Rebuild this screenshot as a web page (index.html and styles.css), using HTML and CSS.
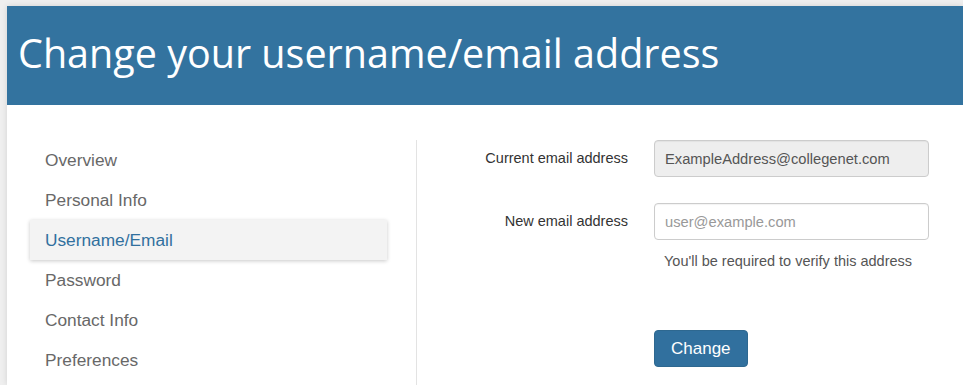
FILE: index.html
```html
<!DOCTYPE html>
<html lang="en">
<head>
<meta charset="utf-8">
<title>Change your username/email address</title>
<link rel="stylesheet" href="styles.css">
</head>
<body>
<div class="card">
  <header class="page-header">
    <h1 class="page-title">Change your username/email address</h1>
  </header>
  <div class="content">
    <nav class="sidebar">
      <a class="nav-item" href="#">Overview</a>
      <a class="nav-item" href="#">Personal Info</a>
      <a class="nav-item active" href="#">Username/Email</a>
      <a class="nav-item" href="#">Password</a>
      <a class="nav-item" href="#">Contact Info</a>
      <a class="nav-item" href="#">Preferences</a>
    </nav>
    <form class="form">
      <label class="form-label" for="cur">Current email address</label>
      <input class="form-control readonly" id="cur" type="text" value="ExampleAddress@collegenet.com" readonly>
      <label class="form-label" for="new">New email address</label>
      <div class="field">
        <input class="form-control" id="new" type="email" placeholder="user@example.com">
        <p class="help">You'll be required to verify this address</p>
      </div>
      <div class="actions">
        <button class="btn" type="button">Change</button>
      </div>
    </form>
  </div>
</div>
</body>
</html>
```
FILE: styles.css
```css
html, body {
  margin: 0;
  padding: 0;
}
body {
  background: #efefef;
  font-family: "Liberation Sans", Arial, sans-serif;
  height: 385px;
  overflow: hidden;
}
.card {
  margin: 6px 0 0 7px;
  background: #fff;
  box-shadow: 0 0 6px rgba(0, 0, 0, 0.12);
  height: 379px;
  overflow: hidden;
}
.page-header {
  background: #33739f;
  height: 99px;
  display: flex;
  align-items: center;
  padding-left: 11px;
}
.page-title {
  margin: 0;
  font-family: "Open Sans", sans-serif;
  font-weight: 400;
  font-size: 39.5px;
  color: #fff;
  line-height: 1;
  position: relative;
  top: -2px;
}
.content {
  display: flex;
  padding-top: 35px;
}
.sidebar {
  display: flex;
  flex-direction: column;
  box-sizing: content-box;
  width: 357px;
  padding-left: 23px;
  padding-right: 29px;
  border-right: 1px solid #e3e3e3;
  min-height: 260px;
}
.nav-item {
  display: block;
  height: 40px;
  line-height: 40px;
  padding-left: 15px;
  font-size: 17.3px;
  color: #686868;
  text-decoration: none;
}
.nav-item.active {
  background: #f3f3f3;
  color: #31709e;
  box-shadow: 0 1px 4px rgba(0, 0, 0, 0.22);
}
.form {
  display: grid;
  grid-template-columns: 200px 275px;
  column-gap: 26px;
  row-gap: 26px;
  padding-left: 11px;
  align-content: start;
}
.form-label {
  text-align: right;
  font-size: 14.5px;
  color: #333;
  line-height: 37px;
}
.form-control {
  box-sizing: border-box;
  width: 275px;
  height: 37px;
  border: 1px solid #ccc;
  border-radius: 4px;
  padding: 0 10px;
  font-family: "Liberation Sans", Arial, sans-serif;
  font-size: 14.7px;
  color: #555;
  background: #fff;
  box-shadow: inset 0 1px 1px rgba(0, 0, 0, 0.05);
  outline: none;
}
.form-control.readonly {
  background: #eee;
}
.form-control::placeholder {
  color: #999;
}
.field {
  display: flex;
  flex-direction: column;
}
.help {
  margin: 13px 0 0 10px;
  font-size: 14.5px;
  color: #555;
}
.actions {
  grid-column: 2;
  margin-top: 35px;
}
.btn {
  background: #31709e;
  color: #fff;
  border: 1px solid #2e6890;
  border-radius: 4px;
  height: 37px;
  padding: 0 16px;
  font-family: "Liberation Sans", Arial, sans-serif;
  font-size: 17px;
}
```
